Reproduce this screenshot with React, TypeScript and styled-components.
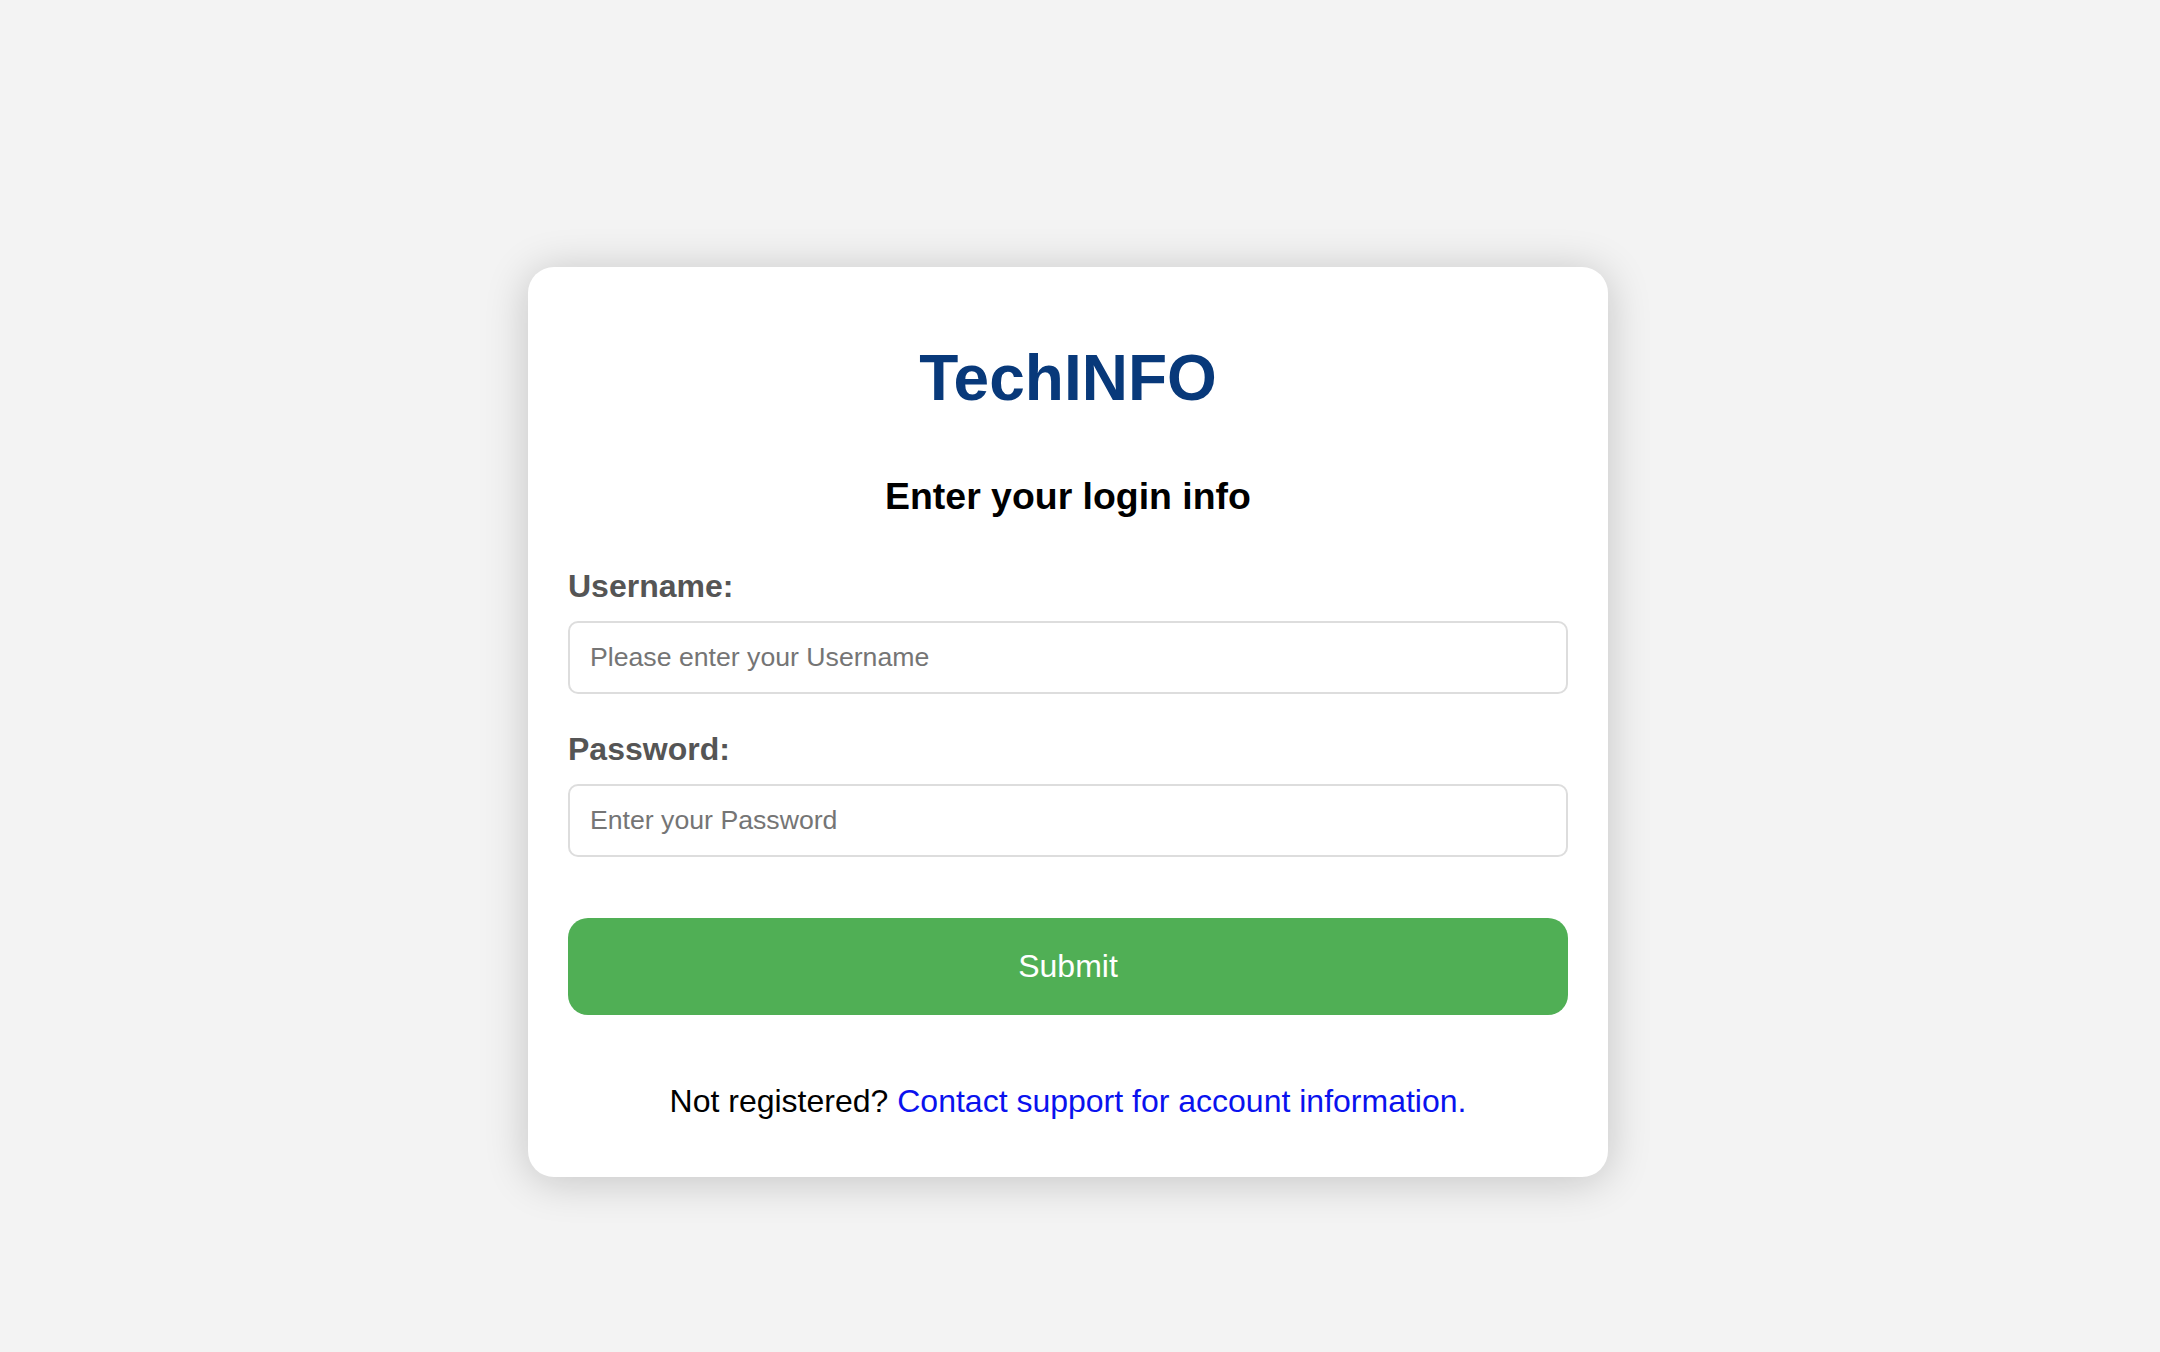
import React from 'react';
import styled, { createGlobalStyle } from 'styled-components';

const GlobalStyle = createGlobalStyle`
  html, body {
    margin: 0;
    padding: 0;
    background: #f3f3f3;
    font-family: 'Liberation Sans', Arial, Helvetica, sans-serif;
  }
  * {
    box-sizing: border-box;
  }
`;

const Page = styled.main`
  min-height: 1352px;
  display: flex;
  align-items: flex-start;
  padding: 267px 0 0 528px;
`;

const Card = styled.form`
  width: 1080px;
  background: #ffffff;
  border-radius: 26px;
  box-shadow: 0 4px 44px rgba(0, 0, 0, 0.2);
  padding: 40px 40px 57px;
  display: flex;
  flex-direction: column;
`;

const Brand = styled.h1`
  margin: 34px 0 0;
  font-size: 64px;
  line-height: 74px;
  font-weight: 700;
  color: #08397a;
  text-align: center;
`;

const Heading = styled.h3`
  margin: 60px 0 0;
  font-size: 37.44px;
  line-height: 43px;
  font-weight: 700;
  color: #000000;
  text-align: center;
`;

const Label = styled.label<{ $gap: number }>`
  margin-top: ${(p) => p.$gap}px;
  font-size: 32px;
  line-height: 37px;
  font-weight: 700;
  color: #555555;
`;

const Input = styled.input`
  margin-top: 16px;
  width: 100%;
  height: 73px;
  padding: 0 20px;
  border: 2px solid #dddddd;
  border-radius: 10px;
  font-family: inherit;
  font-size: 26.67px;
  color: #222222;
  background: #ffffff;
  outline: none;

  &::placeholder {
    color: #757575;
  }
`;

const SubmitButton = styled.button`
  margin-top: 61px;
  width: 100%;
  height: 97px;
  padding: 0;
  border: none;
  border-radius: 20px;
  background: #50af55;
  color: #ffffff;
  font-family: inherit;
  font-size: 32px;
  cursor: pointer;
`;

const Footer = styled.p`
  margin: 68px 0 0;
  font-size: 32px;
  line-height: 37px;
  color: #000000;
  text-align: center;

  a {
    color: #0a12ee;
    text-decoration: none;
  }
`;

export default function App() {
  return (
    <>
      <GlobalStyle />
      <Page>
        <Card onSubmit={(e) => e.preventDefault()}>
          <Brand>TechINFO</Brand>
          <Heading>Enter your login info</Heading>
          <Label $gap={50} htmlFor="username">
            Username:
          </Label>
          <Input id="username" type="text" placeholder="Please enter your Username" />
          <Label $gap={37} htmlFor="password">
            Password:
          </Label>
          <Input id="password" type="password" placeholder="Enter your Password" />
          <SubmitButton type="submit">Submit</SubmitButton>
          <Footer>
            Not registered? <a href="#">Contact support for account information.</a>
          </Footer>
        </Card>
      </Page>
    </>
  );
}
